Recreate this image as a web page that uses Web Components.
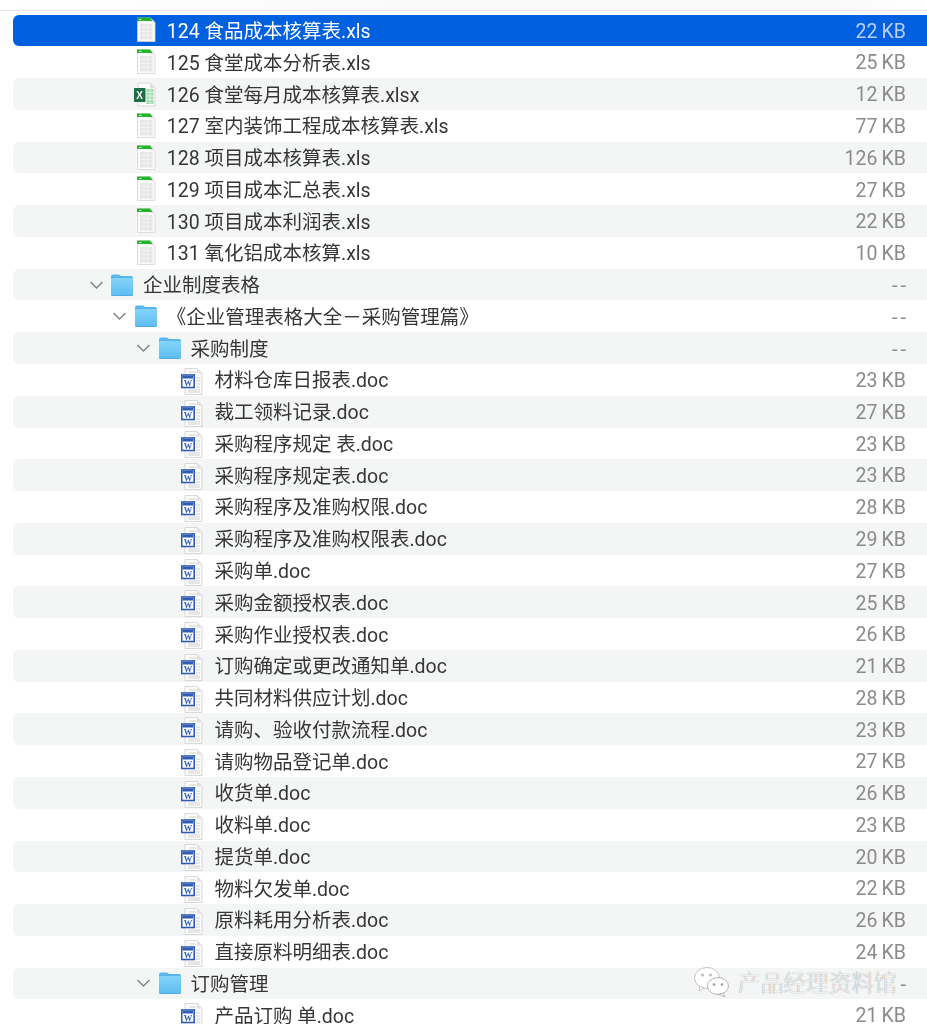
<!DOCTYPE html>
<html lang="zh">
<head>
<meta charset="utf-8">
<title>Finder</title>
<style>
    html, body { margin: 0; height: 1024px; overflow: hidden; background: #fff; }
</style>
</head>
<body>
<finder-window>
    <file-row level="1" icon="xls" name="124 食品成本核算表.xls" size="22 KB" selected></file-row>
    <file-row level="1" icon="xls" name="125 食堂成本分析表.xls" size="25 KB"></file-row>
    <file-row level="1" icon="xlsx" name="126 食堂每月成本核算表.xlsx" size="12 KB" striped></file-row>
    <file-row level="1" icon="xls" name="127 室内装饰工程成本核算表.xls" size="77 KB"></file-row>
    <file-row level="1" icon="xls" name="128 项目成本核算表.xls" size="126 KB" striped></file-row>
    <file-row level="1" icon="xls" name="129 项目成本汇总表.xls" size="27 KB"></file-row>
    <file-row level="1" icon="xls" name="130 项目成本利润表.xls" size="22 KB" striped></file-row>
    <file-row level="1" icon="xls" name="131 氧化铝成本核算.xls" size="10 KB"></file-row>
    <file-row level="0" icon="folder" name="企业制度表格" size="--" striped open></file-row>
    <file-row level="1" icon="folder" name="《企业管理表格大全－采购管理篇》" size="--" open></file-row>
    <file-row level="2" icon="folder" name="采购制度" size="--" striped open></file-row>
    <file-row level="3" icon="doc" name="材料仓库日报表.doc" size="23 KB"></file-row>
    <file-row level="3" icon="doc" name="裁工领料记录.doc" size="27 KB" striped></file-row>
    <file-row level="3" icon="doc" name="采购程序规定 表.doc" size="23 KB"></file-row>
    <file-row level="3" icon="doc" name="采购程序规定表.doc" size="23 KB" striped></file-row>
    <file-row level="3" icon="doc" name="采购程序及准购权限.doc" size="28 KB"></file-row>
    <file-row level="3" icon="doc" name="采购程序及准购权限表.doc" size="29 KB" striped></file-row>
    <file-row level="3" icon="doc" name="采购单.doc" size="27 KB"></file-row>
    <file-row level="3" icon="doc" name="采购金额授权表.doc" size="25 KB" striped></file-row>
    <file-row level="3" icon="doc" name="采购作业授权表.doc" size="26 KB"></file-row>
    <file-row level="3" icon="doc" name="订购确定或更改通知单.doc" size="21 KB" striped></file-row>
    <file-row level="3" icon="doc" name="共同材料供应计划.doc" size="28 KB"></file-row>
    <file-row level="3" icon="doc" name="请购、验收付款流程.doc" size="23 KB" striped></file-row>
    <file-row level="3" icon="doc" name="请购物品登记单.doc" size="27 KB"></file-row>
    <file-row level="3" icon="doc" name="收货单.doc" size="26 KB" striped></file-row>
    <file-row level="3" icon="doc" name="收料单.doc" size="23 KB"></file-row>
    <file-row level="3" icon="doc" name="提货单.doc" size="20 KB" striped></file-row>
    <file-row level="3" icon="doc" name="物料欠发单.doc" size="22 KB"></file-row>
    <file-row level="3" icon="doc" name="原料耗用分析表.doc" size="26 KB" striped></file-row>
    <file-row level="3" icon="doc" name="直接原料明细表.doc" size="24 KB"></file-row>
    <file-row level="2" icon="folder" name="订购管理" size="-" striped open></file-row>
    <file-row level="3" icon="doc" name="产品订购 单.doc" size="21 KB"></file-row>
    <wechat-mark slot="mark" label="产品经理资料馆"></wechat-mark>
</finder-window>

<script>
// Icons are all drawn in a 24x32 box, the row centres them.
const ICONS = {
    xls: `
        <path d="M3.5 4h13l4.5 4.500v19h-17.500z" fill="#fbfbfb" stroke="#d4d4d4" stroke-width=".8"/>
        <path d="M16.500 4v4.500h4.500z" fill="#e4e4e4"/>
        <path d="M3 3.500h13l2.500 3.500h-15.500z" fill="#25b32c"/>
        <rect x="5" y="5" width="2.500" height="1" fill="#d5f5d5"/>
        <rect x="6" y="10" width="12.500" height="15.500" fill="#e6e6e6"/>
        <path d="M6 13.500h12.500M6 17.500h12.500M6 21.500h12.500M10 10v15.500M14 10v15.500" stroke="#f4f4f4" stroke-width=".8"/>`,
    xlsx: `
        <path d="M4 5h12l5 5v18h-17z" fill="#fdfdfd" stroke="#cfcfcf" stroke-width=".8"/>
        <path d="M16 5v5h5z" fill="#dedede"/>
        <rect x="12.500" y="11" width="7" height="15" fill="#9ddcae"/>
        <path d="M12.500 14.500h7M12.500 18h7M12.500 21.500h7M16 11v15" stroke="#f3fbf5" stroke-width=".8"/>
        <rect x="0" y="10" width="11.500" height="14" rx=".8" fill="#1d7044"/>
        <text x="5.700" y="21" text-anchor="middle" font-family="Liberation Sans" font-size="10" font-weight="700" fill="#fff">X</text>`,
    doc: `
        <path d="M4 4.500h12l5 5v21h-17z" fill="#fbfbfb" stroke="#cfcfcf" stroke-width=".8"/>
        <path d="M16 4.500v5h5z" fill="#dfdfdf"/>
        <path d="M8 8h7M8 10.500h7M15 14h4M15 17h4M15 20h4M15 23h4M7 26h12M7 28h12" stroke="#c9c9c9" stroke-width=".8"/>
        <rect x=".700" y="11" width="12.500" height="12.500" fill="#fff" stroke="#2f5cb4" stroke-width="1.600"/>
        <rect x="1.500" y="12" width="10.500" height="2.500" fill="#2f5cb4"/>
        <text x="6.900" y="22" text-anchor="middle" font-family="Liberation Serif" font-size="8.500" font-weight="700" fill="#2f5cb4">W</text>`,
    folder: `
        <defs><linearGradient id="body" x1="0" y1="0" x2="0" y2="1">
            <stop offset="0" stop-color="#84d4fa"/><stop offset="1" stop-color="#5cbcf0"/>
        </linearGradient></defs>
        <path d="M1 8c0-1.500.700-2.500 2-2.500h5.500c1.300 0 1.700 1.600 3 1.600h9.500c1.400 0 2 .800 2 2.100v2.800h-22z" fill="#58b6ea"/>
        <path d="M1 10.500c0-.900.500-1.400 1.500-1.400h19c1 0 1.500.500 1.500 1.400v14.800c0 1-.600 1.700-1.600 1.700h-18.800c-1 0-1.600-.700-1.600-1.700z" fill="url(#body)"/>
        <path d="M1.500 26.500h21" stroke="#4da7dc" stroke-width=".8"/>`
};

class FinderWindow extends HTMLElement {
    constructor() {
        super();
        this.attachShadow({ mode: "open" });
        this.shadowRoot.innerHTML = `
        <style>
            :host {
                display: block;
                position: relative;
                height: 1024px;
                overflow: hidden;
                font-family: Roboto, "Noto Sans CJK SC", sans-serif;
            }
            #head {
                height: 10px;
                border-bottom: 1px solid #e6e6e6;
                background: linear-gradient(90deg, #fff 0, #fafafa 45%, #fafafa 90%, #fff 100%);
            }
            #rows {
                padding-top: 3.600px;
                filter: blur(.3px);
            }
        </style>
        <div id="head"></div>
        <div id="rows"><slot></slot></div>
        <slot name="mark"></slot>
        `;
    }
}

class FileRow extends HTMLElement {
    constructor() {
        super();
        this.attachShadow({ mode: "open" });
        this.shadowRoot.innerHTML = `
        <style>
            :host {
                display: flex;
                align-items: center;
                box-sizing: border-box;
                height: 31.770px;
                margin-left: 13px;
                padding-left: calc(75.500px + var(--level, 0) * 23.800px);
                padding-right: 21px;
                border-radius: 6px 0 0 6px;
                color: #363636;
                font-size: 19.500px;
            }
            :host([striped]) { background: #f4f5f5; }
            :host([selected]) { background: #0060df; color: #fff; }
            #arrow { width: 21.500px; flex: none; }
            #arrow svg { display: block; }
            #icon { width: 24px; height: 32px; flex: none; }
            #name { flex: 1; margin: 0 0 2px 9px; white-space: pre; }
            #size { margin-top: 1.500px; color: #8b8b8b; word-spacing: -1.200px; letter-spacing: .1px; }
            #size.dash { letter-spacing: 3px; margin-right: -3px; font-size: 20px; }
            :host([selected]) #size { color: #b9d0f6; }
        </style>
        <div id="arrow"></div>
        <svg id="icon" viewBox="0 0 24 32"></svg>
        <div id="name"></div>
        <div id="size"></div>
        `;
    }

    connectedCallback() {
        const root = this.shadowRoot;
        const size = this.getAttribute("size");
        this.style.setProperty("--level", this.getAttribute("level") || 0);
        root.querySelector("#icon").innerHTML = ICONS[this.getAttribute("icon")];
        root.querySelector("#name").textContent = this.getAttribute("name");
        root.querySelector("#size").textContent = size;
        if (!size.includes("KB")) root.querySelector("#size").className = "dash";
        if (this.hasAttribute("open")) {
            root.querySelector("#arrow").innerHTML = `
            <svg width="15" height="10" viewBox="0 0 15 10">
                <path d="M1.500 2l6 6 6-6" fill="none" stroke="#858585" stroke-width="1.500"/>
            </svg>`;
        }
    }
}

class WechatMark extends HTMLElement {
    constructor() {
        super();
        this.attachShadow({ mode: "open" });
        this.shadowRoot.innerHTML = `
        <style>
            :host {
                position: absolute;
                left: 693px;
                top: 966px;
                display: flex;
                align-items: center;
                gap: 8px;
                font-size: 22.700px;
                line-height: 32px;
                color: rgba(255, 255, 255, .9);
                text-shadow: 0 0 1px #6f6f6f;
                font-family: "Noto Sans CJK SC", sans-serif;
                font-weight: 300;
            }
        </style>
        <svg width="37" height="32" viewBox="0 0 37 32">
            <ellipse cx="14" cy="12" rx="12.500" ry="10.500" fill="#fff" stroke="#c4c4c4"/>
            <path d="M7 20l-1 5 5-3z" fill="#fff" stroke="#c4c4c4"/>
            <ellipse cx="25" cy="20" rx="10.500" ry="8.500" fill="#fff" stroke="#b5b5b5"/>
            <path d="M30 27l2 4-6-3z" fill="#fff" stroke="#b5b5b5"/>
            <circle cx="9.500" cy="9" r="1.500" fill="#bbb"/>
            <circle cx="17.500" cy="9" r="1.500" fill="#bbb"/>
            <circle cx="21" cy="18.500" r="1.300" fill="#999"/>
            <circle cx="29" cy="18.500" r="1.300" fill="#999"/>
        </svg>
        <span id="label"></span>
        `;
    }

    connectedCallback() {
        this.shadowRoot.querySelector("#label").textContent = this.getAttribute("label");
    }
}

customElements.define("finder-window", FinderWindow);
customElements.define("file-row", FileRow);
customElements.define("wechat-mark", WechatMark);
</script>
</body>
</html>
